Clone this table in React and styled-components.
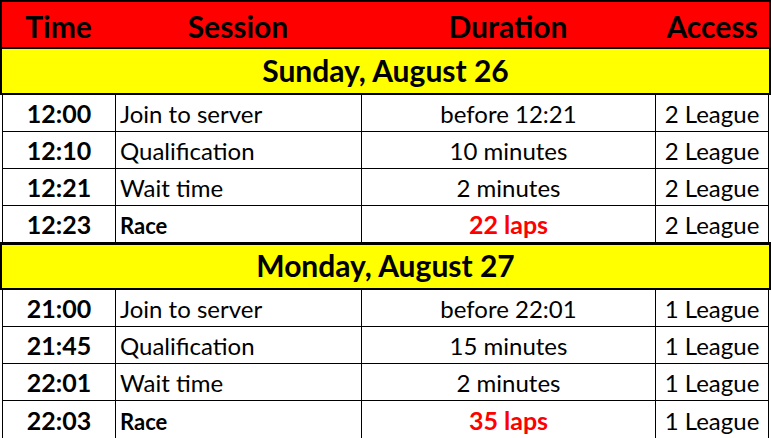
import React from 'react';
import styled, { createGlobalStyle } from 'styled-components';

const GlobalStyle = createGlobalStyle`
  html, body {
    margin: 0;
    padding: 0;
    background: #ffffff;
  }
  body {
    font-family: Lato, "Open Sans", "Liberation Sans", sans-serif;
    color: #000000;
  }
`;

const Sheet = styled.div`
  width: 771px;
  height: 438px;
  overflow: hidden;
  display: flex;
  flex-direction: column;
`;

const HeaderRow = styled.div`
  display: grid;
  grid-template-columns: 113px 246px 294px 1fr;
  height: 45px;
  background: #ff0000;
  border: 2px solid #000;
`;

const HeaderCell = styled.div`
  display: flex;
  align-items: flex-end;
  justify-content: center;
  padding-bottom: 6px;
  font-size: 30px;
  font-weight: 700;
  line-height: 1;
`;

const Band = styled.div`
  display: flex;
  align-items: flex-end;
  justify-content: center;
  height: ${({ $h }) => $h}px;
  padding-bottom: 8px;
  box-sizing: border-box;
  background: #ffff00;
  border: 2px solid #000;
  border-top-width: ${({ $top }) => $top}px;
  font-size: 30px;
  font-weight: 700;
  line-height: 1;
`;

const Row = styled.div`
  display: grid;
  grid-template-columns: 113px 246px 294px 1fr;
  height: ${({ $h }) => $h}px;
  margin: 0 2px;
  border-left: 1px solid #000;
  border-right: 1px solid #000;
  border-bottom: ${({ $last }) => ($last ? 'none' : '1px solid #000')};
`;

const Cell = styled.div`
  display: flex;
  align-items: flex-end;
  justify-content: ${({ $align }) => $align || 'center'};
  padding: 0 ${({ $pad }) => $pad || 0}px 5px;
  border-right: ${({ $end }) => ($end ? 'none' : '1px solid #000')};
  font-size: ${({ $size }) => $size || 24}px;
  font-weight: ${({ $bold }) => ($bold ? 700 : 400)};
  color: ${({ $red }) => ($red ? '#ff0000' : '#000')};
  line-height: 1;
  white-space: nowrap;
`;

const days = [
  {
    title: 'Sunday, August 26',
    league: '2 League',
    rows: [
      ['12:00', 'Join to server', 'before 12:21'],
      ['12:10', 'Qualification', '10 minutes'],
      ['12:21', 'Wait time', '2 minutes'],
      ['12:23', 'Race', '22 laps'],
    ],
  },
  {
    title: 'Monday, August 27',
    league: '1 League',
    rows: [
      ['21:00', 'Join to server', 'before 22:01'],
      ['21:45', 'Qualification', '15 minutes'],
      ['22:01', 'Wait time', '2 minutes'],
      ['22:03', 'Race', '35 laps'],
    ],
  },
];

function App() {
  return (
    <>
      <GlobalStyle />
      <Sheet>
        <HeaderRow>
          <HeaderCell>Time</HeaderCell>
          <HeaderCell>Session</HeaderCell>
          <HeaderCell>Duration</HeaderCell>
          <HeaderCell>Access</HeaderCell>
        </HeaderRow>
        {days.map((day, d) => (
          <React.Fragment key={day.title}>
            <Band $top={d === 0 ? 0 : 3} $h={d === 0 ? 46 : 48}>{day.title}</Band>
            {day.rows.map((r, i) => {
              const race = r[1] === 'Race';
              const last = i === day.rows.length - 1;
              return (
                <Row key={r[0]} $h={last ? 37 : 36} $last={last}>
                  <Cell $bold $size={25}>{r[0]}</Cell>
                  <Cell $align="flex-start" $pad={4} $bold={race} $size={race ? 22 : 24}>{r[1]}</Cell>
                  <Cell $bold={race} $red={race} $size={race ? 25 : 24}>{r[2]}</Cell>
                  <Cell $end>{day.league}</Cell>
                </Row>
              );
            })}
          </React.Fragment>
        ))}
      </Sheet>
    </>
  );
}

export default App;
